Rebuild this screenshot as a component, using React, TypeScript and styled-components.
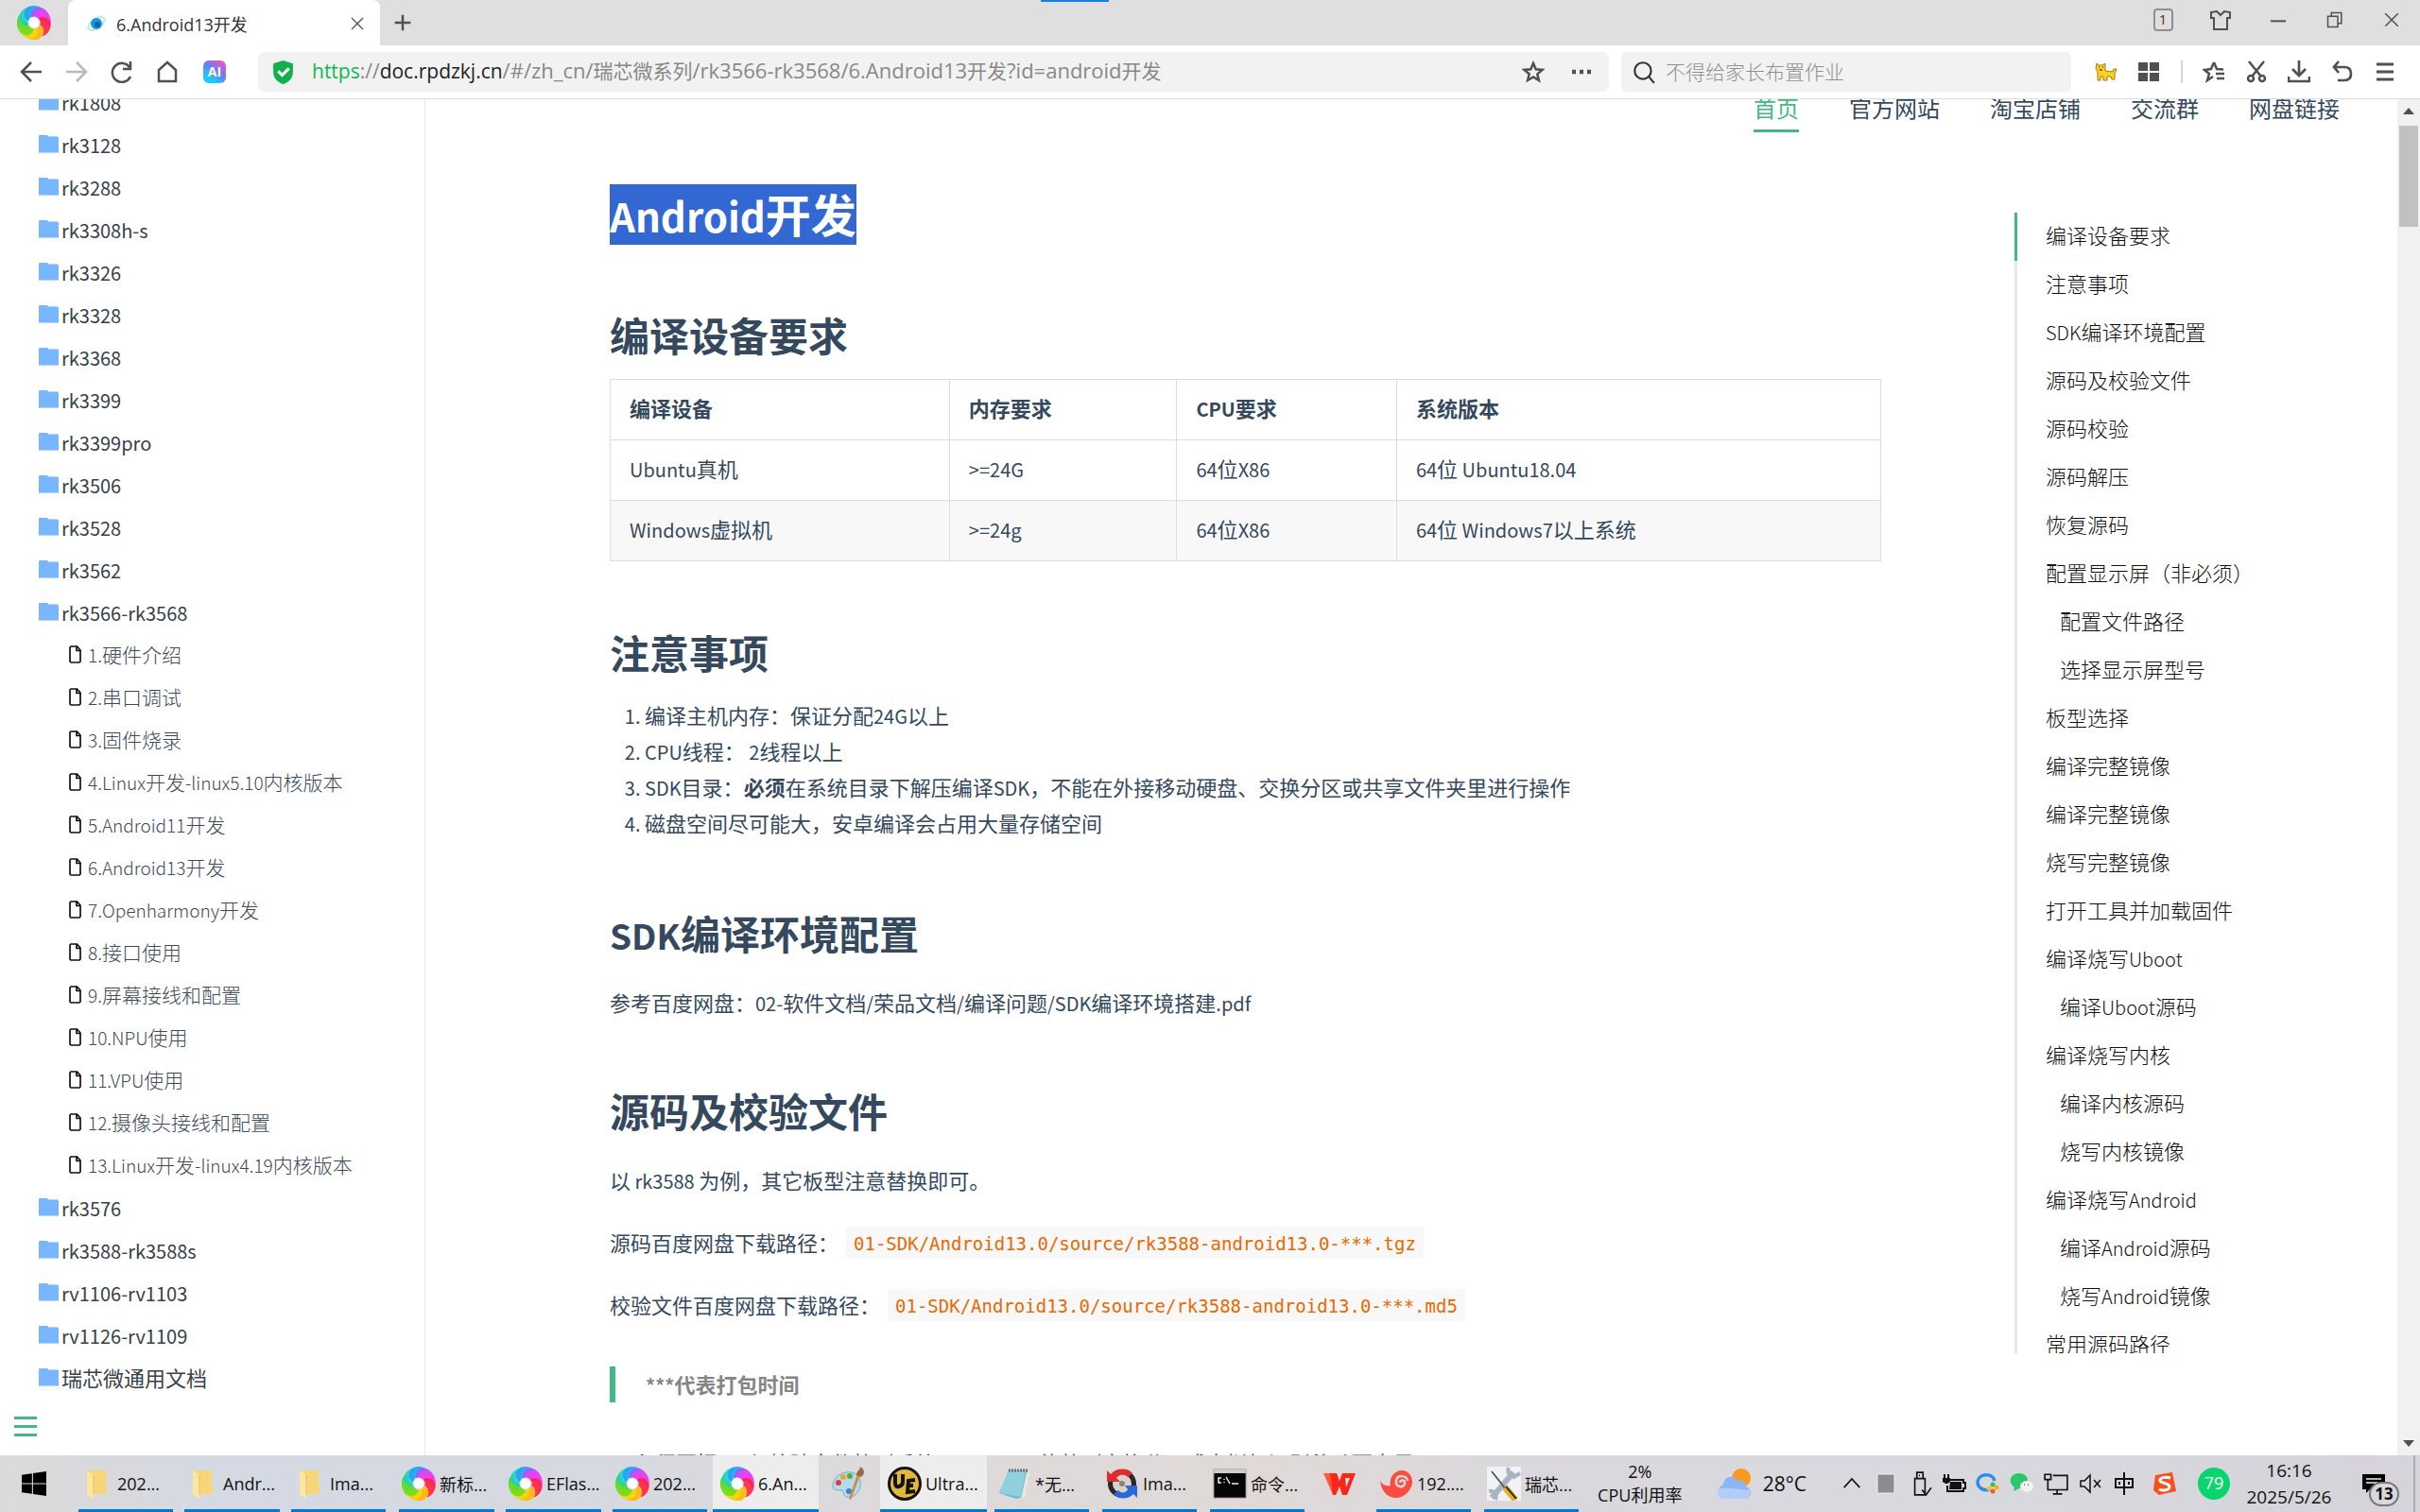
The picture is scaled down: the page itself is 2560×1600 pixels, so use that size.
import React from "react";
import styled, { createGlobalStyle, css } from "styled-components";

const CJK = `"Noto Sans CJK SC", "Noto Sans", sans-serif`;
const UI = `"Open Sans", "Noto Sans CJK SC", sans-serif`;

const GlobalStyle = createGlobalStyle`
  * { box-sizing: border-box; }
  body { margin: 0; background: #fff; overflow: hidden; }
  button { border: 0; padding: 0; margin: 0; background: none; font: inherit; color: inherit; cursor: pointer; }
  a { color: inherit; text-decoration: none; }
  ul, ol { list-style: none; margin: 0; padding: 0; }
  svg { display: block; flex: none; }
`;

const Screen = styled.div`
  display: flex;
  flex-direction: column;
  height: 100vh;
  font-family: ${UI};
  color: #34495e;
`;

/* ---------- mixed script text ---------- */

const LatinRun = styled.span<{ $size: number }>`
  font-size: ${(p) => p.$size}px;
  line-height: 1;
`;

function Mix({ text, latin = 20 }: { text: string; latin?: number }) {
  return (
    <>
      {text.split(/([\x20-\x7e]+)/).map((part, i) =>
        i % 2 ? (
          <LatinRun key={i} $size={latin}>
            {part}
          </LatinRun>
        ) : (
          part
        )
      )}
    </>
  );
}

/* ---------- browser chrome ---------- */

const TabStrip = styled.header`
  position: relative;
  display: flex;
  align-items: stretch;
  height: 48px;
  flex: none;
  background: #dfdfdf;
  color: #444;
`;

const LogoSlot = styled.div`
  display: flex;
  width: 72px;
  align-items: center;
  justify-content: center;
`;

const Tab = styled.div`
  display: flex;
  align-items: center;
  gap: 10px;
  width: 330px;
  padding: 2px 16px 0 19px;
  background: #fff;
  border-radius: 8px 8px 0 0;
  font-size: 18px;
  color: #333;
`;

const TabTitle = styled.span`
  flex: 1;
`;

const IconButton = styled.button<{ $w?: number; $faded?: boolean }>`
  display: flex;
  align-items: center;
  justify-content: center;
  align-self: center;
  width: ${(p) => p.$w ?? 24}px;
  height: 42px;
  flex: none;
  color: ${(p) => (p.$faded ? "#b8b8b8" : "#505050")};
`;

const WindowButtons = styled.div`
  display: flex;
  align-items: center;
  margin-left: auto;
  padding-bottom: 6px;
`;

const CountBox = styled.span`
  width: 21px;
  height: 24px;
  border: 2px solid #8f8f8f;
  border-radius: 4px;
  font-size: 15px;
  line-height: 19px;
  text-align: center;
  color: #5a2d0c;
`;

const TopMark = styled.div`
  position: absolute;
  top: 0;
  left: 43%;
  width: 72px;
  height: 2px;
  background: #1a7fd6;
`;

const Toolbar = styled.div`
  display: flex;
  align-items: center;
  height: 57px;
  flex: none;
  padding-left: 21px;
  background: #fff;
  border-bottom: 1px solid #dedede;
`;

const NavButtons = styled.div`
  display: flex;
  gap: 24px;
  width: 252px;
`;

const AiBadge = styled.span`
  width: 24px;
  height: 24px;
  border-radius: 6px;
  background: linear-gradient(215deg, #ff4fb4 5%, #6a7cff 45%, #1cc9f5 75%);
  color: #fff;
  font-size: 14px;
  font-weight: 700;
  line-height: 24px;
  text-align: center;
`;

const Field = styled.div<{ $grow?: boolean }>`
  display: flex;
  align-items: center;
  height: 42px;
  background: #f2f2f2;
  border-radius: 6px;
  ${(p) =>
    p.$grow
      ? css`
          flex: 1;
          padding: 0 9px 0 14px;
          gap: 18px;
        `
      : css`
          width: 476px;
          margin-left: 13px;
          padding-left: 11px;
          gap: 10px;
        `}
`;

const Url = styled.a`
  flex: 1;
  padding-bottom: 2px;
  font-size: 21px;
  line-height: 30px;
  color: #888;
  white-space: nowrap;
`;
const Secure = styled.span`
  color: #0cba51;
`;
const Host = styled.span`
  color: #222;
`;

const SearchInput = styled.input`
  flex: 1;
  min-width: 0;
  height: 30px;
  border: 0;
  padding: 0 0 2px;
  outline: 0;
  background: none;
  font: 21px/28px ${CJK};
  &::placeholder {
    color: #8f8f8f;
    font-weight: 300;
    opacity: 1;
  }
`;

const Tools = styled.div`
  display: flex;
  align-items: center;
  justify-content: space-between;
  width: 319px;
  margin: 0 25px;
`;

const Divider = styled.span`
  width: 2px;
  height: 24px;
  background: #d6d6d6;
`;

/* ---------- page ---------- */

const Page = styled.div`
  display: flex;
  flex: 1;
  min-height: 0;
  overflow: hidden;
  font-family: ${CJK};
  font-size: 22px;
`;

const Sidebar = styled.aside`
  width: 450px;
  flex: none;
  overflow: hidden;
  border-right: 1px solid #ebebeb;
`;

const Tree = styled.ul`
  margin-top: -18px;
`;

const FolderLink = styled.a`
  display: flex;
  align-items: center;
  gap: 3px;
  height: 45px;
  padding: 0 0 5px 41px;
  color: #364149;
  line-height: 40px;
`;

const FileLink = styled(FolderLink)`
  gap: 7px;
  padding-left: 73px;
  color: #3c4a5a;
  font-size: 21px;
  font-weight: 300;
`;

const Toggle = styled.button`
  display: flex;
  flex-direction: column;
  gap: 6px;
  margin: 17px 0 0 15px;
`;
const ToggleBar = styled.span`
  width: 24px;
  height: 3px;
  background: #42b983;
`;

const Content = styled.div`
  flex: 1;
  min-width: 0;
  overflow: hidden;
`;

const TopNav = styled.nav`
  display: flex;
  justify-content: flex-end;
  gap: 53px;
  height: 35px;
  padding-right: 61px;
  font-size: 24px;
  line-height: 18px;
`;

const TopLink = styled.a<{ $active?: boolean }>`
  height: 35px;
  ${(p) =>
    p.$active &&
    css`
      color: #42b983;
      border-bottom: 3px solid #42b983;
    `}
`;

const Columns = styled.div`
  display: flex;
  align-items: flex-start;
  gap: 141px;
  padding-left: 195px;
`;

const Article = styled.article`
  flex: 1;
  min-width: 0;
  padding-top: 55px;
`;

const H1 = styled.h1`
  height: 63px;
  margin: 0;
  font-size: 48px;
`;
const Selected = styled.span`
  display: block;
  width: fit-content;
  height: 64px;
  background: #3367d1;
  color: #fff;
  line-height: 60px;
`;

const H2 = styled.h2`
  height: 56px;
  margin: 71px 0 0;
  font-size: 42px;
  line-height: 50px;
`;

const Para = styled.p<{ $after?: boolean }>`
  margin: ${(p) => (p.$after ? 23 : 28)}px 0 0;
  line-height: 38px;
`;

const Table = styled.table`
  width: 100%;
  margin-top: 16px;
  border-collapse: collapse;
  table-layout: fixed;
  th,
  td {
    height: 64px;
    padding: 0 20px 5px;
    border: 1px solid #ddd;
    text-align: left;
  }
  tbody tr:nth-child(2n) {
    background: #f8f8f8;
  }
`;
const Col = styled.col<{ $w: string }>`
  width: ${(p) => p.$w};
`;

const Steps = styled.ol`
  margin-top: 16px;
  padding: 0 0 2px 37px;
  list-style: decimal;
  line-height: 38px;
  li {
    height: 38px;
  }
  li::marker {
    font-size: 20px;
  }
`;

const Code = styled.code`
  display: inline-block;
  height: 34px;
  margin: 3px 8px 0;
  padding: 0 8px;
  border-radius: 3px;
  background: #f8f8f8;
  color: #e96900;
  font: 19px/36px "DejaVu Sans Mono", monospace;
  vertical-align: top;
`;

const Quote = styled.blockquote`
  height: 38px;
  margin: 47px 0 44px;
  padding-left: 32px;
  border-left: 6px solid #42b983;
  color: #858585;
  font-weight: 700;
  line-height: 36px;
`;

const ClippedLine = styled.p`
  margin: 0 0 0 26px;
  line-height: 38px;
  white-space: nowrap;
`;

const Toc = styled.nav`
  width: 405px;
  height: 1207px;
  flex: none;
  margin-top: 85px;
  overflow: hidden;
`;

const TocLink = styled.a<{ $sub?: boolean; $active?: boolean }>`
  display: block;
  height: 51px;
  padding-left: ${(p) => (p.$sub ? 45 : 30)}px;
  border-left: 3px solid ${(p) => (p.$active ? "#42b983" : "#e8e8e8")};
  color: #111;
  font-weight: 300;
  line-height: 46px;
`;

const ScrollTrack = styled.div`
  display: flex;
  flex-direction: column;
  align-items: center;
  width: 24px;
  flex: none;
  padding: 9px 0;
  background: #f1f1f1;
`;
const ScrollThumb = styled.div`
  width: 20px;
  height: 107px;
  margin: 12px 0 auto;
  background: #c1c1c1;
`;
const Arrow = styled.span<{ $down?: boolean }>`
  border: 6px solid transparent;
  border-top: ${(p) => (p.$down ? "7px solid #505050" : "0")};
  border-bottom: ${(p) => (p.$down ? "0" : "7px solid #505050")};
`;

/* ---------- taskbar ---------- */

const Taskbar = styled.footer`
  display: flex;
  align-items: stretch;
  height: 60px;
  flex: none;
  background: linear-gradient(90deg, #dcdad9 0, #d4d9e3 10%, #d7d9e0 26%, #dddadb 38%, #e0d9d8 52%, #d9d8dd 66%, #d8d9df 80%, #d6d3da 100%);
  color: #111;
  font-size: 18px;
`;

const Start = styled.button`
  display: flex;
  width: 72px;
  align-items: center;
  justify-content: center;
`;

const Task = styled.button<{ $w: number; $gap?: number; $open?: boolean; $lit?: boolean }>`
  display: flex;
  align-items: center;
  gap: 4px;
  width: ${(p) => p.$w}px;
  margin-left: ${(p) => p.$gap ?? 12}px;
  padding: 0 0 0 ${(p) => (p.$lit ? 8 : 3)}px;
  flex: none;
  white-space: nowrap;
  border-top: 3px solid ${(p) => (p.$lit ? "#ededee" : "transparent")};
  border-bottom: 3px solid ${(p) => (p.$open ? "#0078d7" : "transparent")};
  ${(p) => p.$lit && "background: #ededee;"}
`;

const Tray = styled.div`
  display: flex;
  align-items: center;
  margin-left: auto;
`;

const Stack = styled.div<{ $w: number; $size: number; $line: number }>`
  width: ${(p) => p.$w}px;
  text-align: center;
  white-space: nowrap;
  font-size: ${(p) => p.$size}px;
  line-height: ${(p) => p.$line}px;
`;

const Weather = styled.button`
  display: flex;
  align-items: center;
  gap: 12px;
  margin: 0 30px 0 34px;
  font-size: 21px;
`;

const TrayCell = styled.button<{ $w?: number }>`
  display: flex;
  align-items: center;
  justify-content: center;
  width: ${(p) => p.$w ?? 36}px;
  height: 60px;
`;

const Round = styled.span`
  width: 34px;
  height: 34px;
  border-radius: 50%;
  background: #06d66c;
  color: #fff;
  font-size: 18px;
  line-height: 33px;
  text-align: center;
`;

const Notice = styled.button`
  position: relative;
  width: 40px;
  height: 40px;
  margin-left: 24px;
`;
const NoticeCount = styled.span`
  position: absolute;
  right: 0;
  bottom: -4px;
  width: 32px;
  height: 26px;
  border: 2px solid #777;
  border-radius: 13px;
  background: #d9d8dd;
  font-size: 17px;
  font-weight: 700;
  line-height: 22px;
  text-align: center;
`;
const ShowDesktop = styled.span`
  width: 7px;
  height: 60px;
  margin-left: 15px;
  border-left: 2px solid #aeacb2;
`;

/* ---------- drawings ---------- */

const arms: [number, string][] = [
  [-100, "#1fd64a"],
  [-55, "#25cfc0"],
  [-15, "#1ea2f8"],
  [30, "#b050f8"],
  [60, "#f03cf4"],
  [100, "#ff2146"],
  [165, "#ffb505"],
  [205, "#f7d80a"],
  [235, "#6fdc22"],
];
function Swirl({ size = 36 }: { size?: number }) {
  return (
    <svg width={size} height={size} viewBox="-20 -20 40 40">
      {arms.map(([angle, color]) => (
        <path
          key={angle}
          d="M-6-4C-11-10-9-18 0-20C7-20 12-17 14-12C8-14 3-12 1-7C-1-8-4-7-6-4Z"
          fill={color}
          opacity="0.9"
          transform={`rotate(${angle})`}
        />
      ))}
      <circle r="6" fill="#fff" opacity="0.95" />
    </svg>
  );
}

const Line = ({ d, w = 24, sw = 2, fill = "none", color = "currentColor" }: { d: string; w?: number; sw?: number; fill?: string; color?: string }) => (
  <svg width={w} height={w} viewBox="0 0 24 24" fill={fill} stroke={color} strokeWidth={sw}>
    <path d={d} />
  </svg>
);

const FolderIcon = () => (
  <svg width="21" height="19" viewBox="0 0 21 19">
    <path d="M0 1Q0 0 1 0H9l2 2h9q1 0 1 1v15q0 1-1 1H1q-1 0-1-1z" fill="#78b6ff" />
    <path d="M11 1.500h9.500M0.500 18.500h20" stroke="#b5d6ff" />
  </svg>
);

const FileIcon = () => (
  <svg width="13" height="19" viewBox="0 0 13 19" fill="none" stroke="#111" strokeWidth="1.700">
    <path d="M2 1h6.500L12 5v12l-1 1H2l-1-1V2zM8 1v4.500h4" />
  </svg>
);

const TaskFolder = () => (
  <svg width="34" height="36" viewBox="0 0 34 36">
    <path d="M6 4h20v14l1 2v9H6z" fill="#f7d679" />
    <path d="M6 4l7 5v24l-1 1-6-5z" fill="#fde6a0" />
    <path d="M13 9v20" stroke="#e8bf58" />
  </svg>
);

const Paint = () => (
  <svg width="38" height="38" viewBox="0 0 38 38">
    <path d="M18 7c10-2 17 6 15 15-2 8-9 13-15 11-4-2-1-6-5-7-6 0-10 0-9-6C5 13 11 8 18 7z" fill="#b4daf0" stroke="#7ba9c9" />
    <circle cx="10" cy="18" r="3" fill="#d9432e" />
    <circle cx="15" cy="12" r="3" fill="#eaa928" />
    <circle cx="22" cy="11" r="3" fill="#59ad36" />
    <circle cx="21" cy="27" r="3" fill="#3d7fd0" />
    <path d="M33 10L23 36l-2-1 9-26z" fill="#d28a3a" />
    <path d="M29 10c0-5 4-5 4-9 5 3 5 8 1 11z" fill="#9a6a3c" />
  </svg>
);

const UltraEdit = () => (
  <svg width="36" height="36" viewBox="0 0 36 36">
    <circle cx="18" cy="18" r="16.500" fill="#e2b83a" stroke="#15120a" strokeWidth="3" />
    <path d="M8 8v9q0 5 4 4t4-5V8M29 14l-7 1-1 12 8-1M21 20h6" fill="none" stroke="#15120a" strokeWidth="4" />
  </svg>
);

const Notepad = () => (
  <svg width="36" height="36" viewBox="0 0 36 36">
    <path d="M12 4h20l-4 28-8 2L2 28z" fill="#6fb9cb" />
    <path d="M12 4h18l-5 28L2 28z" fill="#8fd0de" />
    <path d="M31 6l3 1-5 25-4 2z" fill="#e8e8e2" />
    <path d="M12 4h20" stroke="#6a6f73" strokeWidth="3" strokeDasharray="2 1" />
  </svg>
);

const Disk = () => (
  <svg width="36" height="36" viewBox="0 0 36 36">
    <circle cx="18" cy="18" r="15" fill="#2a2626" />
    <circle cx="18" cy="18" r="10" fill="#d8d2c8" />
    <circle cx="18" cy="18" r="3" fill="#8b8378" />
    <path d="M2 16V4l4 4C12 1 24 1 29 7l-5 4c-4-4-9-3-12 1l4 4z" fill="#de2b2b" />
    <path d="M34 20v13l-4-4c-6 6-16 6-21 0l5-4c4 4 8 3 10-1l-3-4z" fill="#2a67d8" />
  </svg>
);

const Terminal = () => (
  <svg width="36" height="36" viewBox="0 0 36 36">
    <path d="M1 3h34v30H1z" fill="#050505" stroke="#8b8b8b" />
    <path d="M1 3h34v4H1z" fill="#c9ccd0" />
    <path d="M9 12H6v5h3M12 13v1m0 2v1M14 11l4 7M20 18h7" stroke="#eee" strokeWidth="1.500" fill="none" />
  </svg>
);

const Wps = () => (
  <svg width="36" height="36" viewBox="0 0 36 36">
    <path d="M1 7h11l4 15-5 8z" fill="#ff5a36" />
    <path d="M8 7h7l3 8 3-8h14l-9 23h-5l-3-9-4 9h-3z" fill="#f5281b" />
    <path d="M24 12h5l-4 10z" fill="#ded9dc" />
  </svg>
);

const Snail = () => (
  <svg width="36" height="36" viewBox="0 0 36 36">
    <path d="M1 15c3 5 7 6 11 5-2-8 4-16 12-16 6 0 11 5 11 12S28 33 18 33 2 25 1 15z" fill="#fa4d3d" />
    <path d="M30 15c-1-6-11-7-12 0s8 8 9 3c1-4-5-5-5-1" fill="none" stroke="#dbd9dc" strokeWidth="2.500" />
  </svg>
);

const ToolsIcon = () => (
  <svg width="36" height="36" viewBox="0 0 36 36">
    <path d="M0 0h36v36H0z" fill="#f1f2f4" />
    <path d="M5 33L28 6" stroke="#a9b4c1" strokeWidth="6" />
    <path d="M23 1c-2 5 1 9 5 10l7-4M2 26c5-1 9 3 7 9" fill="none" stroke="#a9b4c1" strokeWidth="4" />
    <path d="M5 5l15 19" stroke="#55606b" strokeWidth="2" />
    <path d="M19 22l11 13" stroke="#e3b42a" strokeWidth="7" />
    <path d="M20 21l11 13" stroke="#3b3520" strokeWidth="2" />
  </svg>
);

const Cat = () => (
  <svg width="24" height="24" viewBox="0 0 24 24">
    <path d="M2 3l2 2h4l3-2v8l8 1 1-3h3l-2 5v6h-3l-1-3h-4v4H9v-4H6v4H3v-9L1 9z" fill="#fbd21c" stroke="#a9781a" />
    <path d="M4 7h1M8 7h1M5 10h3" stroke="#7b3b10" strokeWidth="1.500" />
  </svg>
);

/* ---------- data ---------- */

const before = ["rk1808", "rk3128", "rk3288", "rk3308h-s", "rk3326", "rk3328", "rk3368", "rk3399", "rk3399pro", "rk3506", "rk3528", "rk3562", "rk3566-rk3568"];
const files = ["1.硬件介绍", "2.串口调试", "3.固件烧录", "4.Linux开发-linux5.10内核版本", "5.Android11开发", "6.Android13开发", "7.Openharmony开发", "8.接口使用", "9.屏幕接线和配置", "10.NPU使用", "11.VPU使用", "12.摄像头接线和配置", "13.Linux开发-linux4.19内核版本"];
const after = ["rk3576", "rk3588-rk3588s", "rv1106-rv1103", "rv1126-rv1109", "瑞芯微通用文档"];
const toc = ["编译设备要求", "注意事项", "SDK编译环境配置", "源码及校验文件", "源码校验", "源码解压", "恢复源码", "配置显示屏（非必须）", ">配置文件路径", ">选择显示屏型号", "板型选择", "编译完整镜像", "编译完整镜像", "烧写完整镜像", "打开工具并加载固件", "编译烧写Uboot", ">编译Uboot源码", "编译烧写内核", ">编译内核源码", ">烧写内核镜像", "编译烧写Android", ">编译Android源码", ">烧写Android镜像", "常用源码路径"];
const rows = [
  ["Ubuntu真机", ">=24G", "64位X86", "64位 Ubuntu18.04"],
  ["Windows虚拟机", ">=24g", "64位X86", "64位 Windows7以上系统"],
];

const Folder = ({ name }: { name: string }) => (
  <li>
    <FolderLink href="#">
      <FolderIcon />
      <span>
        <Mix text={name} />
      </span>
    </FolderLink>
  </li>
);

export default function App() {
  return (
    <Screen>
      <GlobalStyle />
      <TabStrip>
        <TopMark />
        <LogoSlot>
          <Swirl />
        </LogoSlot>
        <Tab>
          <svg width="22" height="22" viewBox="0 0 22 22">
            <ellipse cx="11" cy="11" rx="10" ry="5" fill="none" stroke="#b6efd6" strokeWidth="2" transform="rotate(-35 11 11)" />
            <circle cx="11" cy="11" r="6" fill="#1398d8" />
            <circle cx="12" cy="12" r="3" fill="#0b5fae" />
          </svg>
          <TabTitle>6.Android13开发</TabTitle>
          <IconButton $w={16} aria-label="关闭标签">
            <Line w={16} sw={2} d="M3 3l18 18M21 3L3 21" />
          </IconButton>
        </Tab>
        <IconButton $w={48} aria-label="新标签">
          <Line w={20} sw={3} d="M12 2v20M2 12h20" />
        </IconButton>
        <WindowButtons>
          <IconButton $w={60} aria-label="窗口数">
            <CountBox>1</CountBox>
          </IconButton>
          <IconButton $w={62} aria-label="皮肤">
            <Line sw={2} d="M8 3L2 4v6h3v12h14V10h3V4l-6-1-4 4z" />
          </IconButton>
          <IconButton $w={60} aria-label="最小化">
            <Line w={16} d="M0 14h24" sw={3} />
          </IconButton>
          <IconButton $w={60} aria-label="还原">
            <Line w={18} d="M2 7h14v15H2zM7 7V2h14v15h-5" />
          </IconButton>
          <IconButton $w={60} aria-label="关闭">
            <Line w={18} d="M3 3l18 18M21 3L3 21" />
          </IconButton>
        </WindowButtons>
      </TabStrip>

      <Toolbar>
        <NavButtons>
          <IconButton aria-label="后退"><Line sw={2.5} d="M23 12H3M12 2L2 12l10 10" /></IconButton>
          <IconButton $faded aria-label="前进"><Line sw={2.5} d="M1 12h20M12 2l10 10-10 10" /></IconButton>
          <IconButton aria-label="刷新"><Line sw={2.5} d="M20 7A10 10 0 1 0 21 17M21 1v8h-8" /></IconButton>
          <IconButton aria-label="主页"><Line sw={2.5} d="M12 2l9 8v12H3V10z" /></IconButton>
          <IconButton $w={28} aria-label="AI"><AiBadge>AI</AiBadge></IconButton>
        </NavButtons>
        <Field $grow>
          <svg width="25" height="25" viewBox="0 0 24 24">
            <path d="M12 0l10 3v8c0 7-4 11-10 13C6 22 2 18 2 11V3z" fill="#0fb04d" />
            <path d="M7 11l4 4 7-7" fill="none" stroke="#fff" strokeWidth="3" />
          </svg>
          <Url href="#">
            <Secure>https</Secure>://<Host>doc.rpdzkj.cn</Host>
            <Mix latin={22} text="/#/zh_cn/瑞芯微系列/rk3566-rk3568/6.Android13开发?id=android开发" />
          </Url>
          <IconButton $w={26} aria-label="收藏">
            <Line sw={2.5} d="M12 3l2.700 6.300 6.800.600-5.200 4.500 1.600 6.700L12 17.500 6.100 21l1.600-6.700-5.200-4.400 6.800-.600z" />
          </IconButton>
          <IconButton $w={40} aria-label="更多">
            <Line sw={4.5} d="M2 12h4M10 12h4M18 12h4" />
          </IconButton>
        </Field>
        <Field>
          <Line w={26} color="#333" d="M17 17l5 6M19 11a8 8 0 1 1-16 0a8 8 0 1 1 16 0" />
          <SearchInput aria-label="搜索" placeholder="不得给家长布置作业" />
        </Field>
        <Tools>
          <IconButton aria-label="宠物"><Cat /></IconButton>
          <IconButton aria-label="应用">
            <Line sw={0} fill="currentColor" d="M1 2h10v9H1zM13 2h10v9H13zM1 13h10v9H1zM13 13h10v9H13z" />
          </IconButton>
          <Divider />
          <IconButton aria-label="收藏夹"><Line sw={2.5} d="M14 9l8 .500M12 2L9 9 2 10l5 4-2 7 6-4M12 2l3 7M14 14h9M15 19h8" /></IconButton>
          <IconButton aria-label="截图">
            <Line sw={2.5} d="M4 1l13 16M20 1L7 17M9 19a3 3 0 1 1-6 0a3 3 0 1 1 6 0M21 19a3 3 0 1 1-6 0a3 3 0 1 1 6 0" />
          </IconButton>
          <IconButton aria-label="下载"><Line sw={2.7} d="M12 0v16M5 9l7 7 7-7M1 17v5h22v-5" /></IconButton>
          <IconButton aria-label="撤销"><Line sw={2.7} d="M8 1L3 7l5 6M3 7h11q7 0 7 7t-7 7H7" /></IconButton>
          <IconButton aria-label="菜单"><Line sw={3} d="M3 4h18M3 12h18M3 20h18" /></IconButton>
        </Tools>
      </Toolbar>

      <Page>
        <Sidebar>
          <Tree>
            {before.map((n) => (
              <Folder key={n} name={n} />
            ))}
            <li>
              <ul>
                {files.map((n) => (
                  <li key={n}>
                    <FileLink href="#">
                      <FileIcon />
                      <span>
                        <Mix text={n} latin={19} />
                      </span>
                    </FileLink>
                  </li>
                ))}
              </ul>
            </li>
            {after.map((n) => (
              <Folder key={n} name={n} />
            ))}
          </Tree>
          <Toggle aria-label="切换侧栏">
            <ToggleBar />
            <ToggleBar />
            <ToggleBar />
          </Toggle>
        </Sidebar>

        <Content>
          <TopNav>
            <TopLink href="#" $active>首页</TopLink>
            <TopLink href="#">官方网站</TopLink>
            <TopLink href="#">淘宝店铺</TopLink>
            <TopLink href="#">交流群</TopLink>
            <TopLink href="#">网盘链接</TopLink>
          </TopNav>
          <Columns>
            <Article>
              <H1>
                <Selected>
                  <Mix text="Android开发" latin={42} />
                </Selected>
              </H1>
              <H2>编译设备要求</H2>
              <Table>
                <colgroup>
                  <Col $w="26.7%" />
                  <Col $w="17.9%" />
                  <Col $w="17.3%" />
                  <Col $w="38.1%" />
                </colgroup>
                <thead>
                  <tr>
                    {["编译设备", "内存要求", "CPU要求", "系统版本"].map((h) => (
                      <th key={h}>
                        <Mix text={h} />
                      </th>
                    ))}
                  </tr>
                </thead>
                <tbody>
                  {rows.map((r) => (
                    <tr key={r[0]}>
                      {r.map((c) => (
                        <td key={c}>
                          <Mix text={c} />
                        </td>
                      ))}
                    </tr>
                  ))}
                </tbody>
              </Table>

              <H2>注意事项</H2>
              <Steps>
                <li><Mix text="编译主机内存：保证分配24G以上" /></li>
                <li><Mix text="CPU线程： 2线程以上" /></li>
                <li>
                  <Mix text="SDK目录：" />
                  <strong>必须</strong>
                  <Mix text="在系统目录下解压编译SDK，不能在外接移动硬盘、交换分区或共享文件夹里进行操作" />
                </li>
                <li>磁盘空间尽可能大，安卓编译会占用大量存储空间</li>
              </Steps>

              <H2><Mix text="SDK编译环境配置" latin={37} /></H2>
              <Para $after><Mix text="参考百度网盘：02-软件文档/荣品文档/编译问题/SDK编译环境搭建.pdf" /></Para>

              <H2>源码及校验文件</H2>
              <Para $after><Mix text="以 rk3588 为例，其它板型注意替换即可。" /></Para>
              <Para>
                源码百度网盘下载路径：<Code>01-SDK/Android13.0/source/rk3588-android13.0-***.tgz</Code>
              </Para>
              <Para>
                校验文件百度网盘下载路径：<Code>01-SDK/Android13.0/source/rk3588-android13.0-***.md5</Code>
              </Para>
              <Quote><Mix text="***代表打包时间" /></Quote>
              <ClippedLine><Mix text="必须要把sdk与校验文件放到系统目录下，不能放到交换分区或虚拟机识别移动硬盘里" /></ClippedLine>
            </Article>
            <Toc>
              {toc.map((t, i) => (
                <TocLink key={i} href="#" $sub={t[0] === ">"} $active={i === 0}>
                  <Mix text={t.replace(">", "")} />
                </TocLink>
              ))}
            </Toc>
          </Columns>
        </Content>

        <ScrollTrack>
          <Arrow />
          <ScrollThumb />
          <Arrow $down />
        </ScrollTrack>
      </Page>

      <Taskbar>
        <Start aria-label="开始">
          <svg width="26" height="26" viewBox="0 0 24 24">
            <path d="M0 3.400L10 2v9.500H0zM11 1.800L24 0v11.500H11zM0 12.500h10V22L0 20.600zM11 12.500h13V24l-13-1.800z" fill="#000" />
          </svg>
        </Start>
        <Task $w={100} $gap={11} $open><TaskFolder />202...</Task>
        <Task $w={101} $open><TaskFolder />Andr...</Task>
        <Task $w={100} $open><TaskFolder />Ima...</Task>
        <Task $w={101} $gap={14} $open><Swirl />新标...</Task>
        <Task $w={101} $open><Swirl />EFlas...</Task>
        <Task $w={100} $open><Swirl />202...</Task>
        <Task $w={112} $gap={6} $open $lit><Swirl />6.An...</Task>
        <Task $w={53} $gap={8} aria-label="画图"><Paint /></Task>
        <Task $w={113} $gap={4} $open $lit><UltraEdit />Ultra...</Task>
        <Task $w={100} $gap={8} $open><Notepad />*无...</Task>
        <Task $w={100} $gap={14} $open><Disk />Ima...</Task>
        <Task $w={100} $gap={14} $open><Terminal />命令...</Task>
        <Task $w={54} $gap={16} aria-label="WPS"><Wps /></Task>
        <Task $w={100} $gap={6} $open><Snail />192....</Task>
        <Task $w={100} $gap={14} $open><ToolsIcon />瑞芯...</Task>

        <Tray>
          <Stack $w={94} $size={18} $line={25}>2%<br />CPU利用率</Stack>
          <Weather>
            <svg width="37" height="34" viewBox="0 0 37 34">
              <circle cx="26" cy="11" r="10" fill="#f79a1e" />
              <path d="M8 33a8 8 0 0 1-1-15C7 10 18 6 23 14c6-1 8 3 8 6 8 3 6 13-2 13z" fill="#8db4f3" />
              <path d="M8 33c-6 0-9-6-6-10 8-4 25 2 33 0 2 5-1 10-6 10z" fill="#b2cdfa" />
            </svg>
            28°C
          </Weather>
          <TrayCell aria-label="展开"><Line w={20} color="#111" d="M2 17L12 6l10 11" /></TrayCell>
          <TrayCell aria-label="内存">
            <svg width="20" height="22" viewBox="0 0 20 22"><path d="M1 1h18v20H1z" fill="#8c8c8c" stroke="#eee" /></svg>
          </TrayCell>
          <TrayCell aria-label="USB"><Line w={26} color="#111" sw={1.5} d="M7 7h10v16H7zM9 7V1h6v6M11 4h1M14 18l4 5 5-7" /></TrayCell>
          <TrayCell aria-label="电池">
            <svg width="26" height="20" viewBox="0 0 26 20">
              <path d="M8 6h15v3h2v6h-2v3H6v-6" fill="none" stroke="#111" strokeWidth="2" />
              <path d="M9 8h12v8H8zM1 4h8v4l-3 2H4L1 8zM2 0h2v4H2zM6 0h2v4H6z" fill="#111" />
            </svg>
          </TrayCell>
          <TrayCell aria-label="企业微信">
            <svg width="26" height="24" viewBox="0 0 26 24">
              <path d="M15 18C9 20 2 17 2 10 3 1 18 0 20 9" fill="none" stroke="#2b8cf0" strokeWidth="3.500" />
              <circle cx="18" cy="13" r="2.500" fill="#39bd5a" />
              <circle cx="22" cy="16" r="2.500" fill="#f5ae1c" />
              <circle cx="18" cy="20" r="2.500" fill="#ee5d2a" />
              <circle cx="14" cy="17" r="2.500" fill="#f5c61c" />
            </svg>
          </TrayCell>
          <TrayCell aria-label="微信">
            <svg width="26" height="22" viewBox="0 0 26 22">
              <path d="M10 0c6 0 9 4 9 8s-4 8-9 8l-6 3 1-4C-3 9 1 0 10 0z" fill="#2cc76a" />
              <ellipse cx="18" cy="14" rx="7" ry="6" fill="#f2f2f2" />
              <path d="M15 12h1M19 12h1" stroke="#888" strokeWidth="2" />
            </svg>
          </TrayCell>
          <TrayCell aria-label="网络"><Line w={26} color="#111" sw={1.5} d="M9 4h14v14H4v-7M1 3h6v5H1zM4 8v5M13 18v4M9 22h9" /></TrayCell>
          <TrayCell aria-label="音量"><Line w={24} color="#111" sw={1.5} d="M2 9h4l6-6v18l-6-6H2zM16 8l7 8M23 8l-7 8" /></TrayCell>
          <TrayCell aria-label="输入法"><Line w={24} color="#111" sw={2} d="M3 7h18v9H3zM12 0v24M7 10v3M17 10v3" /></TrayCell>
          <TrayCell $w={50} aria-label="搜狗输入法">
            <svg width="26" height="26" viewBox="0 0 26 26">
              <path d="M3 4l18-3 4 20L7 25 1 20z" fill="#f4511e" />
              <path d="M19 7C13 5 7 7 8 10s10 2 10 6-7 5-11 3" fill="none" stroke="#fff" strokeWidth="3" />
            </svg>
          </TrayCell>
          <TrayCell $w={54} aria-label="79"><Round>79</Round></TrayCell>
          <Stack $w={105} $size={19} $line={28}>16:16<br />2025/5/26</Stack>
          <Notice aria-label="通知">
            <svg width="26" height="26" viewBox="0 0 26 26">
              <path d="M1 3h24v16H9l-4 4v-4H1z" fill="#000" />
              <path d="M5 8h16M5 12h12" stroke="#eee" strokeWidth="1.500" />
            </svg>
            <NoticeCount>13</NoticeCount>
          </Notice>
          <ShowDesktop />
        </Tray>
      </Taskbar>
    </Screen>
  );
}
